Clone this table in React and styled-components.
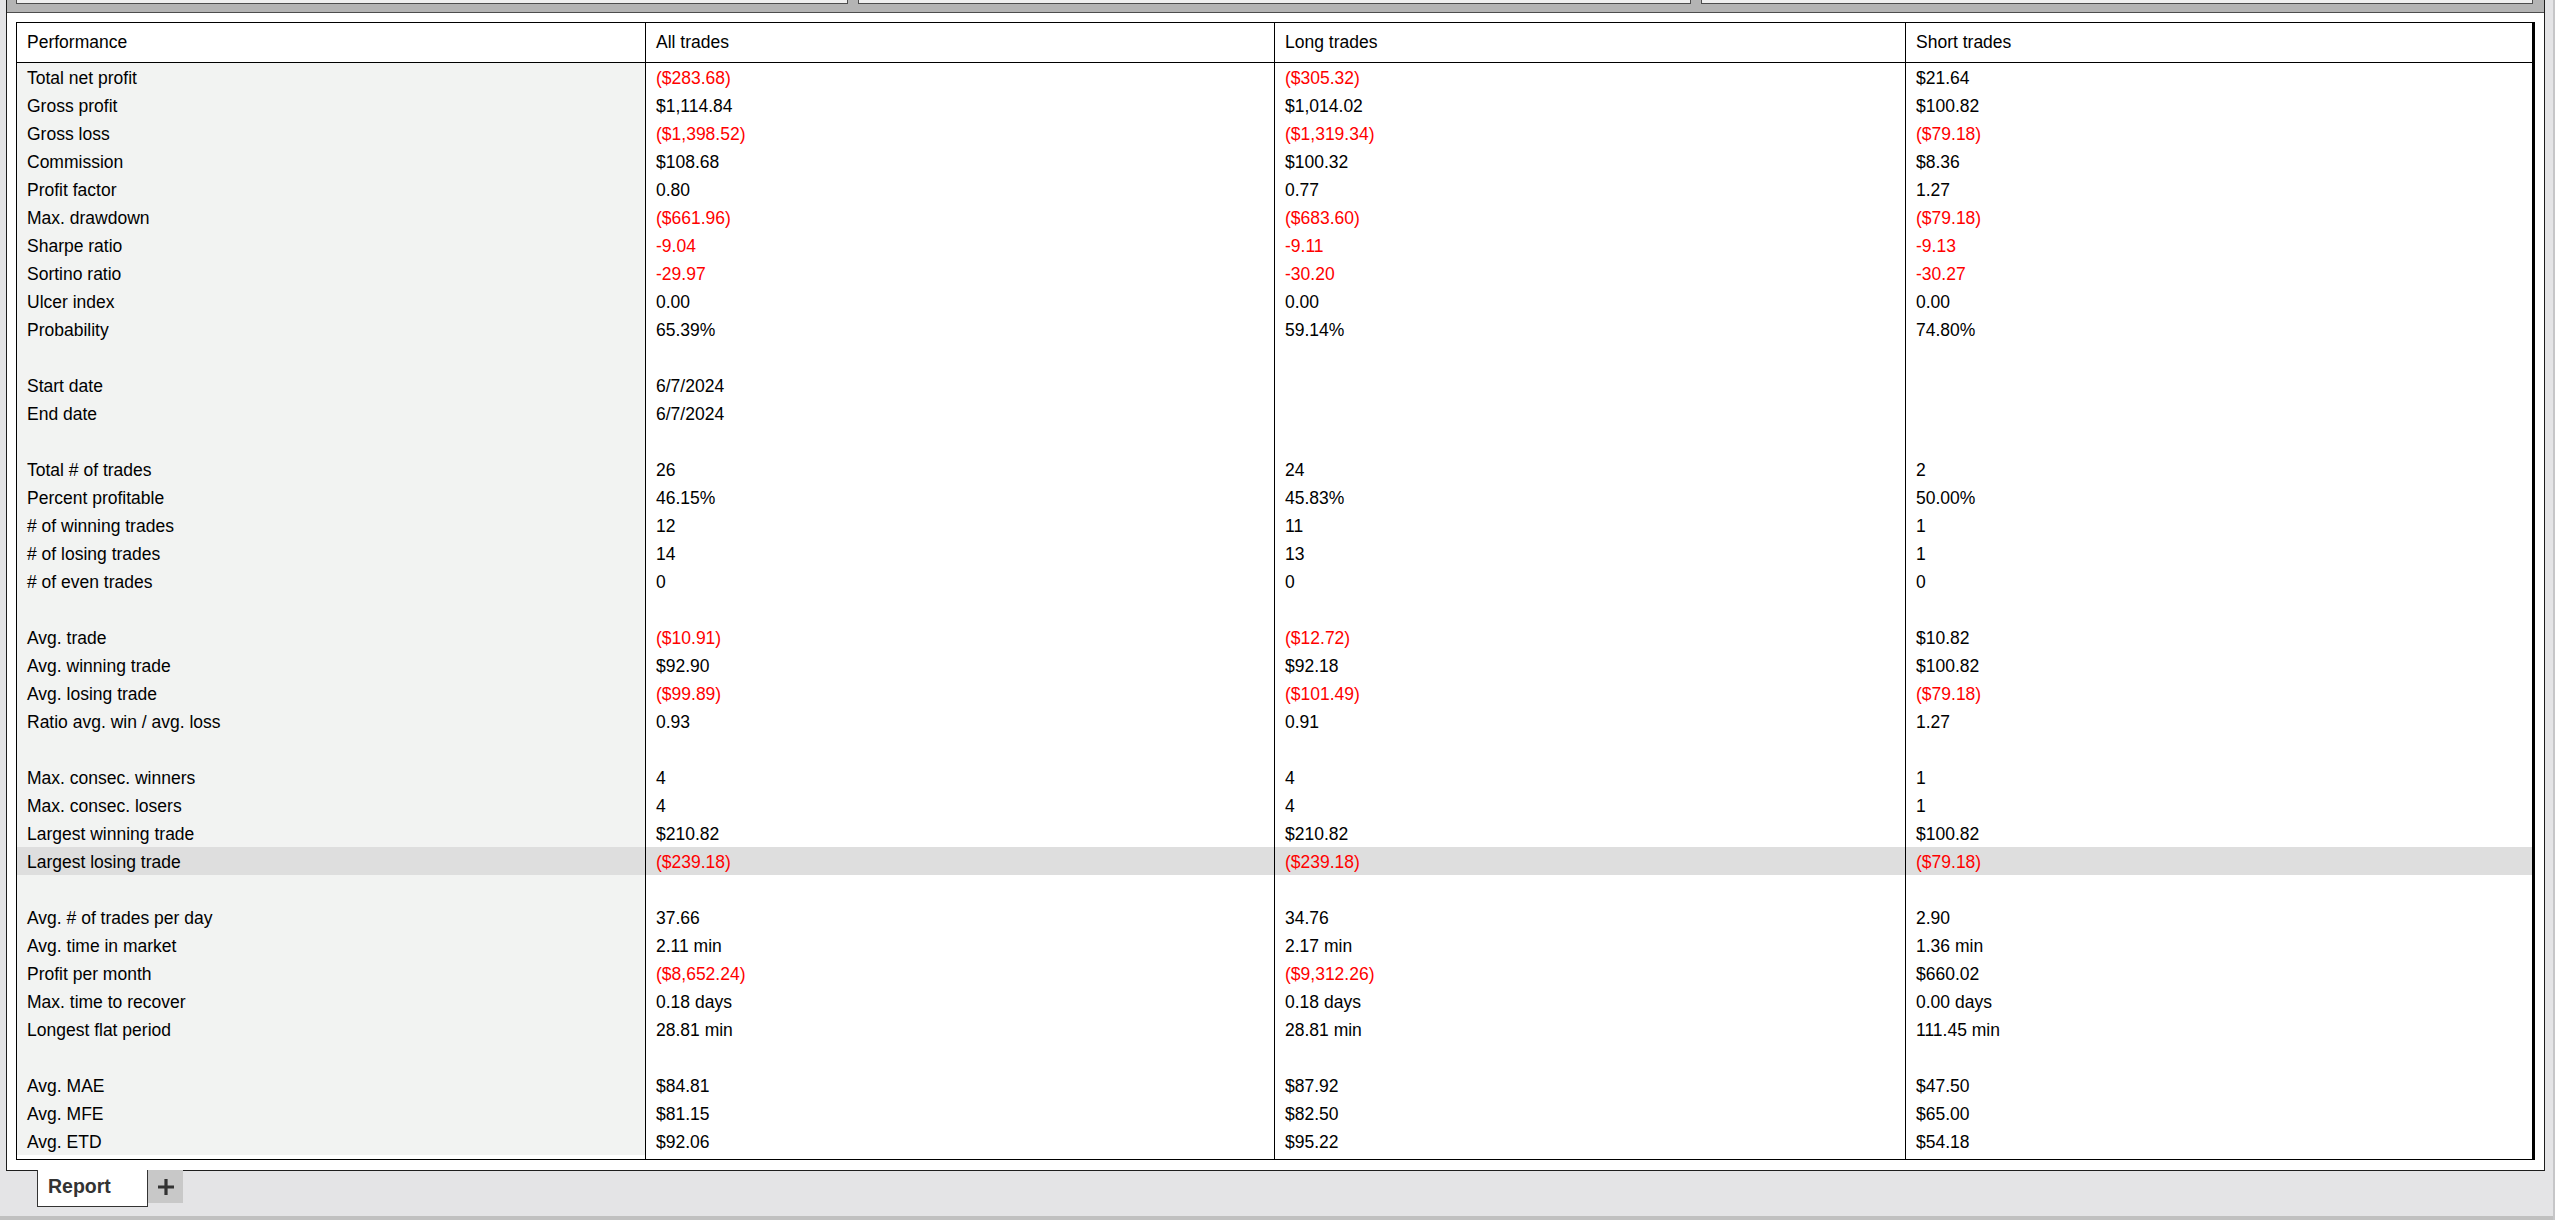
import React from 'react'
import styled, { createGlobalStyle } from 'styled-components'

const GlobalStyle = createGlobalStyle`
  html, body {
    margin: 0;
    padding: 0;
  }
  body {
    background: #e4e4e6;
    font-family: "Liberation Sans", Arial, sans-serif;
    overflow: hidden;
  }
`

const Page = styled.div`
  width: 2555px;
  height: 1220px;
  box-sizing: border-box;
  border-right: 2px solid #c6c6c8;
  display: flex;
  flex-direction: column;
  background: #e4e4e6;
`

const Panel = styled.div`
  margin-left: 6px;
  width: 2539px;
  box-sizing: border-box;
  border: 1px solid #1e1e1e;
  border-top: none;
  background: #fff;
`

const TopStrip = styled.div`
  height: 12px;
  background: #b4b4b4;
  border-bottom: 1px solid #4d4d4d;
  display: flex;
  gap: 10px;
  padding: 0 11px 0 9px;
`

const StripBox = styled.div`
  flex: 1;
  height: 4px;
  box-sizing: border-box;
  background: #efefef;
  border: 1px solid #4d4d4d;
  border-top: none;
`

const Body = styled.div`
  padding: 9px 9px 10px 9px;
`

const Table = styled.div`
  border: 1px solid #000;
  border-right: 3px solid #000;
  background: #fff;
  font-size: 17.5px;
  color: #000;
`

const Row = styled.div`
  display: grid;
  grid-template-columns: 628px 629px 631px 1fr;
  height: ${p => (p.$head ? '39px' : '28px')};
  border-bottom: ${p => (p.$head ? '1px solid #000' : 'none')};
`

const Cell = styled.div`
  padding: ${p => (p.$head ? '0' : '2px')} 0 0 10px;
  box-sizing: border-box;
  display: flex;
  align-items: center;
  white-space: nowrap;
  color: ${p => (p.$neg ? '#ff0000' : '#000')};
  background: ${p => (p.$hl ? '#dedede' : p.$label ? '#f2f3f2' : '#fff')};
  & + & {
    border-left: 1px solid #000;
  }
`

const Spacer = styled.div`
  display: grid;
  grid-template-columns: 628px 629px 631px 1fr;
  height: 4px;
  & > div + div {
    border-left: 1px solid #000;
  }
`

const TabBar = styled.div`
  display: flex;
  align-items: flex-start;
  padding-left: 37px;
  margin-top: -1px;
  position: relative;
`

const Tab = styled.div`
  width: 111px;
  height: 37px;
  box-sizing: border-box;
  border: 1px solid #333;
  border-top: none;
  background: #fff;
  color: #333;
  font-weight: bold;
  font-size: 19.5px;
  padding: 0 0 3px 10px;
  display: flex;
  align-items: center;
`

const AddTab = styled.div`
  width: 35px;
  height: 33px;
  background: #c8c8c8;
  display: flex;
  align-items: center;
  justify-content: center;
`

const Filler = styled.div`
  flex: 1;
`

const BottomStrip = styled.div`
  height: 4px;
  background: #c0c0c0;
`

const rows = [
  ['Total net profit', '($283.68)', '($305.32)', '$21.64'],
  ['Gross profit', '$1,114.84', '$1,014.02', '$100.82'],
  ['Gross loss', '($1,398.52)', '($1,319.34)', '($79.18)'],
  ['Commission', '$108.68', '$100.32', '$8.36'],
  ['Profit factor', '0.80', '0.77', '1.27'],
  ['Max. drawdown', '($661.96)', '($683.60)', '($79.18)'],
  ['Sharpe ratio', '-9.04', '-9.11', '-9.13'],
  ['Sortino ratio', '-29.97', '-30.20', '-30.27'],
  ['Ulcer index', '0.00', '0.00', '0.00'],
  ['Probability', '65.39%', '59.14%', '74.80%'],
  null,
  ['Start date', '6/7/2024', '', ''],
  ['End date', '6/7/2024', '', ''],
  null,
  ['Total # of trades', '26', '24', '2'],
  ['Percent profitable', '46.15%', '45.83%', '50.00%'],
  ['# of winning trades', '12', '11', '1'],
  ['# of losing trades', '14', '13', '1'],
  ['# of even trades', '0', '0', '0'],
  null,
  ['Avg. trade', '($10.91)', '($12.72)', '$10.82'],
  ['Avg. winning trade', '$92.90', '$92.18', '$100.82'],
  ['Avg. losing trade', '($99.89)', '($101.49)', '($79.18)'],
  ['Ratio avg. win / avg. loss', '0.93', '0.91', '1.27'],
  null,
  ['Max. consec. winners', '4', '4', '1'],
  ['Max. consec. losers', '4', '4', '1'],
  ['Largest winning trade', '$210.82', '$210.82', '$100.82'],
  ['Largest losing trade', '($239.18)', '($239.18)', '($79.18)'],
  null,
  ['Avg. # of trades per day', '37.66', '34.76', '2.90'],
  ['Avg. time in market', '2.11 min', '2.17 min', '1.36 min'],
  ['Profit per month', '($8,652.24)', '($9,312.26)', '$660.02'],
  ['Max. time to recover', '0.18 days', '0.18 days', '0.00 days'],
  ['Longest flat period', '28.81 min', '28.81 min', '111.45 min'],
  null,
  ['Avg. MAE', '$84.81', '$87.92', '$47.50'],
  ['Avg. MFE', '$81.15', '$82.50', '$65.00'],
  ['Avg. ETD', '$92.06', '$95.22', '$54.18'],
]

const highlighted = 'Largest losing trade'

const isNeg = v => v.startsWith('(') || v.startsWith('-')

export default function App() {
  return (
    <>
      <GlobalStyle />
      <Page>
        <Panel>
          <TopStrip>
            <StripBox />
            <StripBox />
            <StripBox />
          </TopStrip>
          <Body>
            <Table>
              <Row $head>
                <Cell $head>Performance</Cell>
                <Cell $head>All trades</Cell>
                <Cell $head>Long trades</Cell>
                <Cell $head>Short trades</Cell>
              </Row>
              {rows.map((r, i) => {
                if (!r) {
                  return (
                    <Row key={i}>
                      <Cell $label />
                      <Cell />
                      <Cell />
                      <Cell />
                    </Row>
                  )
                }
                const hl = r[0] === highlighted
                return (
                  <Row key={i}>
                    <Cell $label $hl={hl}>{r[0]}</Cell>
                    {r.slice(1).map((v, j) => (
                      <Cell key={j} $hl={hl} $neg={isNeg(v)}>{v}</Cell>
                    ))}
                  </Row>
                )
              })}
              <Spacer>
                <div />
                <div />
                <div />
                <div />
              </Spacer>
            </Table>
          </Body>
        </Panel>
        <TabBar>
          <Tab>Report</Tab>
          <AddTab>
            <svg width="16" height="16" viewBox="0 0 16 16">
              <path d="M8 0V16M0 8H16" stroke="#333" strokeWidth="3.2" fill="none" />
            </svg>
          </AddTab>
        </TabBar>
        <Filler />
        <BottomStrip />
      </Page>
    </>
  )
}
